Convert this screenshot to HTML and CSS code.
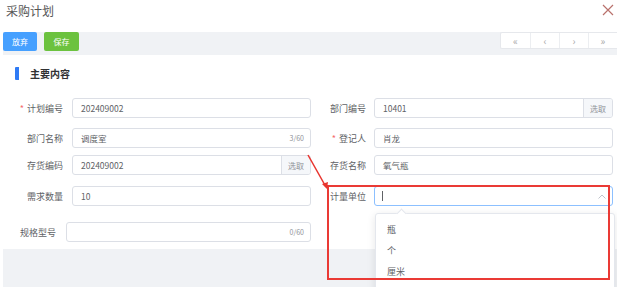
FILE: index.html
```html
<!DOCTYPE html>
<html lang="zh-CN">
<head>
    <meta charset="UTF-8">
    <meta name="viewport" content="width=device-width, initial-scale=1.0">
    <title>采购计划</title>
    <link rel="stylesheet" href="styles.css">
</head>
<body>

    <div class="dialog-head">
        <span class="dialog-title">采购计划</span>
        <svg class="close" width="12" height="12" viewBox="0 0 12 12">
            <path d="M1 1 L11 11 M11 1 L1 11" stroke="#b9716c" stroke-width="1.2" fill="none"/>
        </svg>
    </div>

    <div class="main">
        <div class="toolbar">
            <div class="toolbar-left">
                <button class="btn btn-blue">放弃</button>
                <button class="btn btn-green">保存</button>
            </div>
            <div class="pager">
                <span>«</span>
                <span>‹</span>
                <span>›</span>
                <span>»</span>
            </div>
        </div>

        <div class="card">
            <div class="section-title">主要内容</div>

            <div class="form">
                <div class="row">
                    <div class="field">
                        <label class="required">计划编号</label>
                        <div class="input"><span class="value">202409002</span></div>
                    </div>
                    <div class="field field-right">
                        <label>部门编号</label>
                        <div class="input"><span class="value">10401</span><span class="append">选取</span></div>
                    </div>
                </div>

                <div class="row">
                    <div class="field">
                        <label>部门名称</label>
                        <div class="input"><span class="value">调度室</span><span class="count">3/60</span></div>
                    </div>
                    <div class="field field-right">
                        <label class="required">登记人</label>
                        <div class="input"><span class="value">肖龙</span></div>
                    </div>
                </div>

                <div class="row">
                    <div class="field">
                        <label>存货编码</label>
                        <div class="input"><span class="value">202409002</span><span class="append">选取</span></div>
                    </div>
                    <div class="field field-right">
                        <label>存货名称</label>
                        <div class="input"><span class="value">氧气瓶</span></div>
                    </div>
                </div>

                <div class="row">
                    <div class="field">
                        <label>需求数量</label>
                        <div class="input"><span class="value">10</span></div>
                    </div>
                    <div class="field field-right">
                        <label>计量单位</label>
                        <div class="input input-focus">
                            <span class="cursor"></span>
                            <svg class="caret" width="8" height="5" viewBox="0 0 8 5">
                                <path d="M0.5 4.5 L4 1 L7.5 4.5" stroke="#c0c4cc" stroke-width="1" fill="none"/>
                            </svg>
                        </div>
                    </div>
                </div>

                <div class="row">
                    <div class="field field-wide">
                        <label>规格型号</label>
                        <div class="input"><span class="value"></span><span class="count">0/60</span></div>
                    </div>
                </div>
            </div>
        </div>
    </div>

    <div class="dropdown">
        <div class="option">瓶</div>
        <div class="option">个</div>
        <div class="option">厘米</div>
    </div>

    <div class="mark-box"></div>
    <svg class="mark-arrow" width="30" height="40" viewBox="0 0 30 40">
        <path d="M2 1 L20 33" stroke="#e8352f" stroke-width="1.5" fill="none"/>
        <path d="M16 30 L21 35 L22 28 Z" fill="#e8352f"/>
    </svg>

</body>
</html>
```

FILE: styles.css
```css
*
{
    padding: 0;
    margin: 0;
    box-sizing: border-box;
}

body
{
    width: 617px;
    height: 287px;
    overflow: hidden;
    background: white;
    font-family: "Noto Sans CJK SC", "Liberation Sans", sans-serif;
    color: #606266;
    position: relative;
}

.dialog-head
{
    height: 32px;
    display: flex;
    justify-content: space-between;
    align-items: flex-start;
    padding: 2px 3px 0 6px;
}

.dialog-title
{
    font-size: 12px;
    line-height: 18px;
    color: #555;
}

.close
{
    margin-top: 2px;
}

.main
{
    margin-left: 3px;
    height: 255px;
    background: #f0f2f5;
}

.toolbar
{
    height: 23px;
    display: flex;
    justify-content: space-between;
    align-items: flex-start;
}

.toolbar-left
{
    display: flex;
    gap: 7px;
}

.btn
{
    height: 19px;
    width: 34px;
    border: none;
    border-radius: 2px;
    color: white;
    font-size: 8px;
    font-family: "Noto Sans CJK SC", sans-serif;
}

.btn-blue
{
    background: #46a0ff;
}

.btn-green
{
    width: 35px;
    background: #6cc23f;
}

.pager
{
    display: flex;
    height: 17px;
    background: white;
    border: 1px solid #e6e8ec;
    border-right: none;
    border-radius: 2px 0 0 2px;
}

.pager span
{
    width: 29px;
    display: flex;
    align-items: center;
    justify-content: center;
    font-size: 10px;
    color: #aaa;
    border-left: 1px solid #eceef1;
}

.pager span:first-child
{
    border-left: none;
}

.card
{
    background: white;
    height: 194px;
    padding: 12px 0 0 0;
}

.section-title
{
    margin-left: 12px;
    padding-left: 11px;
    border-left: 4px solid #2f7bf5;
    height: 13px;
    line-height: 13px;
    font-size: 10px;
    font-weight: bold;
    color: #303133;
    border-radius: 1px;
}

.form
{
    margin-top: 18px;
    display: flex;
    flex-direction: column;
}

.row
{
    display: flex;
    height: 20px;
}

.row:nth-child(1)
{
    margin-bottom: 10px;
}

.row:nth-child(2)
{
    margin-bottom: 7px;
}

.row:nth-child(3)
{
    margin-bottom: 11px;
}

.row:nth-child(4)
{
    margin-bottom: 16px;
}

.field
{
    display: flex;
    align-items: center;
    width: 308px;
}

.field label
{
    width: 69px;
    padding-right: 9px;
    text-align: right;
    font-size: 9px;
    color: #606266;
    white-space: nowrap;
}

.field label.required::before
{
    content: "*";
    color: #f56c6c;
    margin-right: 3px;
}

.field .input
{
    width: 239px;
}

.field-right
{
    width: 302px;
}

.field-right label
{
    width: 63px;
    padding-right: 8px;
}

.field-wide label
{
    width: 63px;
    padding-right: 10px;
}

.field-wide .input
{
    width: 245px;
}

.input
{
    height: 20px;
    display: flex;
    align-items: center;
    border: 1px solid #dcdfe6;
    border-radius: 3px;
    background: white;
    overflow: hidden;
}

.input .value
{
    flex: 1;
    padding-left: 8px;
    font-size: 8.5px;
    color: #606266;
}

.input .count
{
    padding-right: 6px;
    font-size: 7px;
    color: #909399;
}

.input .append
{
    width: 29px;
    height: 100%;
    display: flex;
    align-items: center;
    justify-content: center;
    background: #f5f7fa;
    border-left: 1px solid #dcdfe6;
    font-size: 8px;
    color: #909399;
}

.input-focus
{
    border-color: #8cc0ff;
    justify-content: space-between;
    padding: 0 6px 0 7px;
}

.cursor
{
    width: 1px;
    height: 10px;
    background: #606266;
}

.dropdown
{
    position: absolute;
    left: 375px;
    top: 213px;
    width: 240px;
    height: 80px;
    padding-top: 5px;
    background: white;
    border: 1px solid #e4e7ed;
    border-radius: 3px;
    box-shadow: 0 2px 8px rgba(0, 0, 0, 0.1);
    z-index: 1;
}

.dropdown::before
{
    content: "";
    position: absolute;
    left: 22px;
    top: -4px;
    width: 6px;
    height: 6px;
    background: white;
    border-left: 1px solid #e4e7ed;
    border-top: 1px solid #e4e7ed;
    transform: rotate(45deg);
}

.option
{
    height: 21px;
    line-height: 21px;
    padding-left: 11px;
    font-size: 9px;
    color: #606266;
}

.mark-box
{
    position: absolute;
    left: 327px;
    top: 185px;
    width: 283px;
    height: 95px;
    border: 2px solid #ea3a35;
    z-index: 2;
}

.mark-arrow
{
    position: absolute;
    left: 306px;
    top: 154px;
    z-index: 2;
}
```
